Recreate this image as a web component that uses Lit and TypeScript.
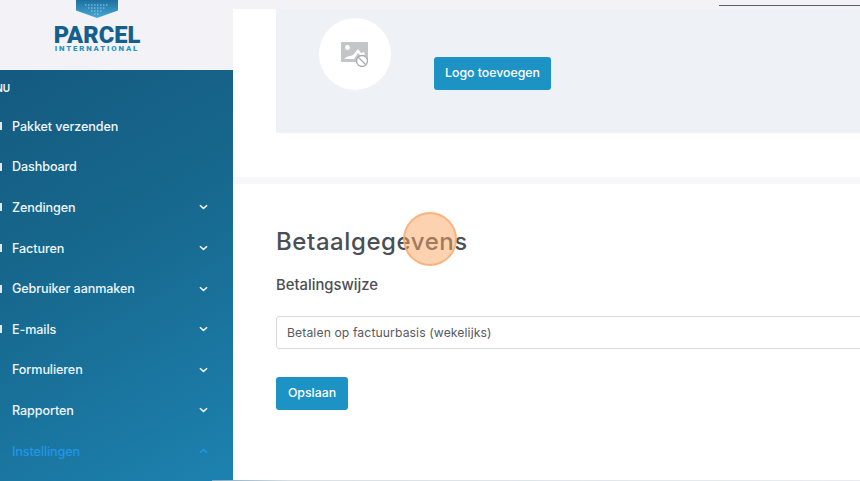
import { LitElement, html, css, svg } from "lit";
import { customElement } from "lit/decorators.js";

const chevDown = html`<svg class="chev" viewBox="0 0 10 6" width="9" height="6"><path d="M1 1l4 3.6L9 1" fill="none" stroke="currentColor" stroke-width="1.7"/></svg>`;
const chevUp = html`<svg class="chev" viewBox="0 0 10 6" width="9" height="6"><path d="M1 5l4-3.6L9 5" fill="none" stroke="currentColor" stroke-width="1.7"/></svg>`;

const items: { label: string; chev?: boolean; active?: boolean; icon?: boolean }[] = [
  { label: "Pakket verzenden", icon: true },
  { label: "Dashboard", icon: true },
  { label: "Zendingen", chev: true, icon: true },
  { label: "Facturen", chev: true, icon: true },
  { label: "Gebruiker aanmaken", chev: true, icon: true },
  { label: "E-mails", chev: true, icon: true },
  { label: "Formulieren", chev: true },
  { label: "Rapporten", chev: true },
  { label: "Instellingen", chev: true, active: true },
];

@customElement("app-root")
export class AppRoot extends LitElement {
  static styles = css`
    :host {
      display: flex;
      width: 860px;
      height: 481px;
      overflow: hidden;
      position: relative;
      background: #fff;
      font-family: "Inter", "Liberation Sans", sans-serif;
      color: #4a4d52;
    }
    .side {
      width: 233px;
      flex: none;
      display: flex;
      flex-direction: column;
      overflow: hidden;
    }
    .brand {
      height: 70px;
      flex: none;
      background: #f2f2f7;
      display: flex;
      flex-direction: column;
      align-items: center;
      padding-right: 39px;
      box-sizing: border-box;
    }
    .hex { display: block; flex: none; }
    .parcel {
      font: 900 23.7px/18px "Roboto", "Liberation Sans", sans-serif;
      color: #155f8c;
      margin-top: 8px;
      height: 18px;
    }
    .intl {
      font: 900 7.8px/8px "Roboto", "Liberation Sans", sans-serif;
      color: #2a93c0;
      letter-spacing: 1.85px;
      margin-top: 1px;
    }
    .nav {
      flex: 1;
      background: linear-gradient(150deg, #155a80 0%, #17698f 45%, #1d82b0 100%);
      color: #fff;
      font-size: 12.6px;
      display: flex;
      flex-direction: column;
      padding-top: 11px;
    }
    .menu-h {
      font-size: 10px;
      font-weight: 600;
      line-height: 14px;
      margin-left: -20px;
      height: 14px;
      margin-bottom: 11px;
      color: #f2f7fa;
    }
    .item {
      height: 40.6px;
      flex: none;
      display: flex;
      align-items: center;
      padding: 0 25px 0 0;
      font-weight: 500;
      letter-spacing: -0.1px;
      color: #eef6fa;
    }
    .ico {
      width: 2px;
      height: 10px;
      margin-right: 10px;
      flex: none;
      overflow: hidden;
      color: #dfeaf0;
    }
    .ico svg { display: block; }
    .label { flex: 1; }
    .chev { flex: none; color: #eef6fa; }
    .active, .active .chev { color: #2196e8; }
    .main {
      flex: 1;
      min-width: 0;
      display: flex;
      flex-direction: column;
      background: #fff;
    }
    .topstrip {
      height: 9px;
      flex: none;
      background: #f3f3f7;
      display: flex;
      justify-content: flex-end;
    }
    .rule {
      width: 141px;
      height: 1px;
      margin-top: 5px;
      background: #5b5e68;
    }
    .upper {
      height: 168px;
      flex: none;
      box-sizing: border-box;
      padding: 0 0 44px 43px;
    }
    .card {
      height: 124px;
      background: #eef1f6;
      display: flex;
      align-items: flex-start;
      padding: 9px 0 0 43px;
      box-sizing: border-box;
      gap: 43px;
    }
    .circle {
      width: 72px;
      height: 72px;
      border-radius: 50%;
      background: #fff;
      display: flex;
      align-items: center;
      justify-content: center;
      flex: none;
    }
    .btn {
      background: #1c93c4;
      color: #fff;
      border: 0;
      border-radius: 3px;
      font: 500 12.3px/1 "Inter", sans-serif;
      display: flex;
      align-items: center;
      justify-content: center;
      padding: 0;
      height: 33px;
    }
    .logo-btn { width: 117px; margin-top: 39px; }
    .band { height: 7px; flex: none; background: #f7f7f9; }
    .pay {
      flex: 1;
      padding: 43px 0 0 43px;
      display: flex;
      flex-direction: column;
      align-items: flex-start;
    }
    h2 {
      margin: 0;
      font-size: 24px;
      line-height: 30px;
      font-weight: 500;
      color: #4b4e54;
      letter-spacing: 0.58px;
    }
    h3 {
      margin: 18px 0 0;
      font-size: 14.8px;
      line-height: 20px;
      font-weight: 500;
      color: #4b4e54;
    }
    .select {
      margin-top: 21px;
      width: 600px;
      height: 33px;
      flex: none;
      box-sizing: border-box;
      border: 1px solid #d9dbde;
      border-radius: 3px;
      padding-left: 10px;
      display: flex;
      align-items: center;
      font-size: 12.2px;
      color: #56595e;
      letter-spacing: 0.1px;
    }
    .save { width: 72px; margin-top: 28px; }
    .spot {
      position: absolute;
      left: 403px;
      top: 212px;
      width: 54px;
      height: 54px;
      box-sizing: border-box;
      border-radius: 50%;
      background: rgba(250, 165, 100, 0.5);
      border: 2px solid rgba(248, 170, 110, 0.75);
    }
    .edge {
      position: absolute;
      left: 212px;
      right: 0;
      bottom: 0;
      height: 1px;
      background: linear-gradient(90deg, #7fa8c0, #d8e0e6 12%, #e8ecef);
    }
  `;

  render() {
    return html`
      <aside class="side">
        <div class="brand">
          <svg class="hex" width="42" height="18" viewBox="0 0 42 18">
            <defs>
              <linearGradient id="hg" x1="0" y1="0" x2="0" y2="1">
                <stop offset="0" stop-color="#1c6f9e" />
                <stop offset="1" stop-color="#4aa9d6" />
              </linearGradient>
            </defs>
            <path d="M0 0H42V10.500L21 18L0 10.500Z" fill="url(#hg)" />
            ${[0, 1, 2, 3].map(
              (r) => svg`<path d="M${9 + r * 3} ${5 + r * 3}H${33 - r * 3}" stroke="#8fd0ee" stroke-width="1" stroke-dasharray="1.500 1.500" />`
            )}
          </svg>
          <div class="parcel">PARCEL</div>
          <div class="intl">INTERNATIONAL</div>
        </div>
        <nav class="nav">
          <div class="menu-h">MENU</div>
          ${items.map(
            (it) => html`<div class="item ${it.active ? "active" : ""}">
              <span class="ico">${it.icon
                ? html`<svg width="2" height="10" viewBox="0 0 2 10"><rect y="1" width="2" height="8" fill="currentColor"/></svg>`
                : ""}</span>
              <span class="label">${it.label}</span>
              ${it.chev ? (it.active ? chevUp : chevDown) : ""}
            </div>`
          )}
        </nav>
      </aside>
      <main class="main">
        <div class="topstrip"><div class="rule"></div></div>
        <section class="upper">
          <div class="card">
            <div class="circle">
              <svg width="28" height="26" viewBox="0 0 28 26">
                <rect x="0" y="1" width="27" height="20" fill="#c4c5c8" />
                <circle cx="6.500" cy="6.500" r="2.400" fill="#fff" />
                <path d="M3 18c3-3 6-3 9-4l5-6 3 4 3-1 2 7H3z" fill="#fff" />
                <path d="M3 18h10l4-6 3 3 4-1 1 6H3z" fill="#c4c5c8" />
                <circle cx="21" cy="20" r="5.500" fill="#fff" stroke="#a9aaae" stroke-width="1.300" />
                <path d="M17.500 16.500l7 7" stroke="#a9aaae" stroke-width="1.300" />
              </svg>
            </div>
            <button class="btn logo-btn">Logo toevoegen</button>
          </div>
        </section>
        <div class="band"></div>
        <section class="pay">
          <h2>Betaalgegevens</h2>
          <h3>Betalingswijze</h3>
          <div class="select">Betalen op factuurbasis (wekelijks)</div>
          <button class="btn save">Opslaan</button>
        </section>
      </main>
      <div class="spot"></div>
      <div class="edge"></div>
    `;
  }
}
